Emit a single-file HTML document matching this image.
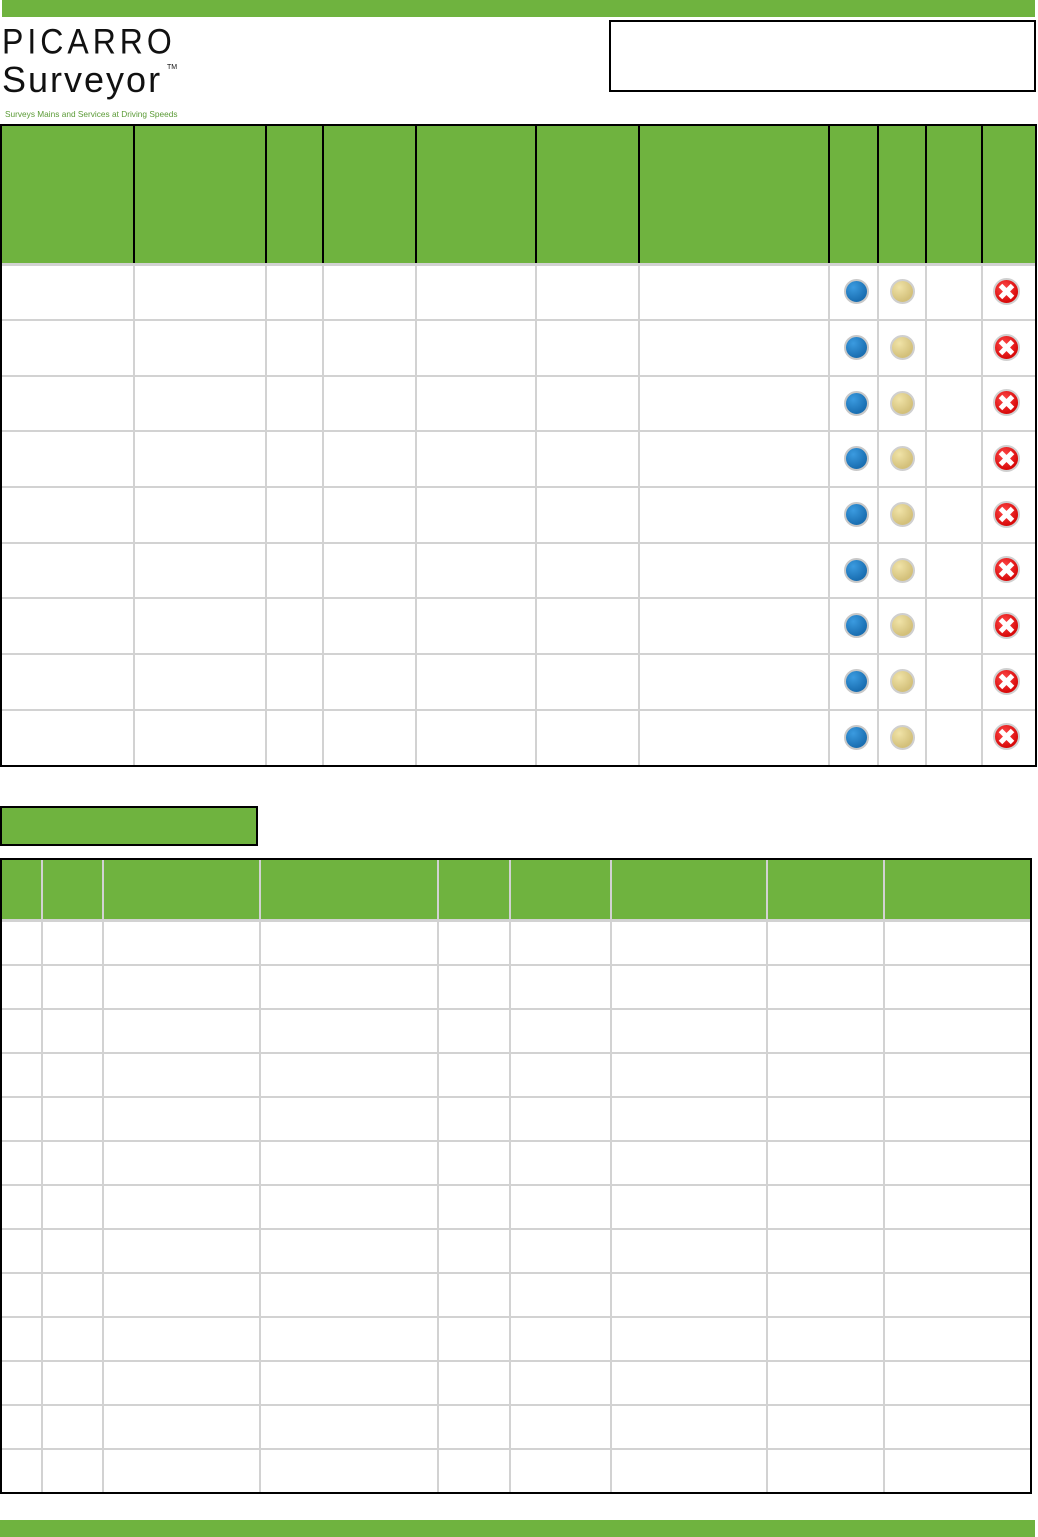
<!DOCTYPE html>
<html><head><meta charset="utf-8"><style>
body{margin:0;width:1038px;height:1537px;position:relative;background:#fff;overflow:hidden;font-family:"Liberation Sans",sans-serif}
div{position:absolute;box-sizing:border-box}
.g{background:#6fb33f}
.k{background:#000}
.l{background:#d2d2d2}
.b{width:25px;height:25px;border-radius:50%;border:2px solid #c8c8c8;background:radial-gradient(circle at 35% 30%,#3b9be0,#1a6fb2 70%)}
.t{width:25px;height:25px;border-radius:50%;border:2px solid #cfcfcf;background:radial-gradient(circle at 35% 30%,#f0e3a8,#d3c07a 70%)}
.x{width:27px;height:27px;border-radius:50%;border:2px solid #d0d0d0;background:radial-gradient(circle at 40% 35%,#ff4a4a,#d80a0a 70%)}
.x:before,.x:after{content:"";position:absolute;left:3px;top:9px;width:17px;height:5px;background:#fff;transform:rotate(45deg)}
.x:after{transform:rotate(-45deg)}
</style></head><body>
<div class="g" style="left:2px;top:0;width:1033px;height:17px"></div>
<div class="g" style="left:0;top:1520px;width:1035px;height:17px"></div>
<div style="left:2px;top:24px;font-size:32px;letter-spacing:4px;line-height:32px;color:#111;transform:scaleY(1.1);transform-origin:0 0">PICARRO</div>
<div style="left:2px;top:60px;font-size:36px;letter-spacing:2px;line-height:40px;color:#111">Surveyor</div>
<div style="left:167px;top:64px;font-size:7px;color:#111">TM</div>
<div style="left:5px;top:109px;font-size:8.3px;color:#5a9a35;white-space:nowrap">Surveys Mains and Services at Driving Speeds</div>
<div style="left:609px;top:20px;width:427px;height:72px;border:2px solid #000"></div>

<div class="g" style="left:0;top:124px;width:1037px;height:140px"></div>
<div class="k" style="left:0;top:124px;width:1037px;height:2px"></div>
<div class="k" style="left:0;top:124px;width:2px;height:643px"></div>
<div class="k" style="left:1035px;top:124px;width:2px;height:643px"></div>
<div class="k" style="left:0;top:765px;width:1037px;height:2px"></div>

<div class="g" style="left:0;top:806px;width:258px;height:40px;border:2px solid #000"></div>
<div class="g" style="left:0;top:858px;width:1032px;height:62px"></div>
<div class="k" style="left:0;top:858px;width:1032px;height:2px"></div>
<div class="k" style="left:0;top:858px;width:2px;height:636px"></div>
<div class="k" style="left:1030px;top:858px;width:2px;height:636px"></div>
<div class="k" style="left:0;top:1492px;width:1032px;height:2px"></div>

<div class="l" style="left:133px;top:264px;width:2px;height:501px"></div>
<div class="k" style="left:133px;top:126px;width:2px;height:138px"></div>
<div class="l" style="left:265px;top:264px;width:2px;height:501px"></div>
<div class="k" style="left:265px;top:126px;width:2px;height:138px"></div>
<div class="l" style="left:322px;top:264px;width:2px;height:501px"></div>
<div class="k" style="left:322px;top:126px;width:2px;height:138px"></div>
<div class="l" style="left:415px;top:264px;width:2px;height:501px"></div>
<div class="k" style="left:415px;top:126px;width:2px;height:138px"></div>
<div class="l" style="left:535px;top:264px;width:2px;height:501px"></div>
<div class="k" style="left:535px;top:126px;width:2px;height:138px"></div>
<div class="l" style="left:638px;top:264px;width:2px;height:501px"></div>
<div class="k" style="left:638px;top:126px;width:2px;height:138px"></div>
<div class="l" style="left:828px;top:264px;width:2px;height:501px"></div>
<div class="k" style="left:828px;top:126px;width:2px;height:138px"></div>
<div class="l" style="left:877px;top:264px;width:2px;height:501px"></div>
<div class="k" style="left:877px;top:126px;width:2px;height:138px"></div>
<div class="l" style="left:925px;top:264px;width:2px;height:501px"></div>
<div class="k" style="left:925px;top:126px;width:2px;height:138px"></div>
<div class="l" style="left:981px;top:264px;width:2px;height:501px"></div>
<div class="k" style="left:981px;top:126px;width:2px;height:138px"></div>

<div class="l" style="left:2px;top:263px;width:1033px;height:3px"></div>
<div class="l" style="left:2px;top:319px;width:1033px;height:2px"></div>
<div class="l" style="left:2px;top:375px;width:1033px;height:2px"></div>
<div class="l" style="left:2px;top:430px;width:1033px;height:2px"></div>
<div class="l" style="left:2px;top:486px;width:1033px;height:2px"></div>
<div class="l" style="left:2px;top:542px;width:1033px;height:2px"></div>
<div class="l" style="left:2px;top:597px;width:1033px;height:2px"></div>
<div class="l" style="left:2px;top:653px;width:1033px;height:2px"></div>
<div class="l" style="left:2px;top:709px;width:1033px;height:2px"></div>

<div class="b" style="left:844px;top:279px"></div><div class="t" style="left:890px;top:279px"></div><div class="x" style="left:993px;top:278px"></div>
<div class="b" style="left:844px;top:335px"></div><div class="t" style="left:890px;top:335px"></div><div class="x" style="left:993px;top:334px"></div>
<div class="b" style="left:844px;top:391px"></div><div class="t" style="left:890px;top:391px"></div><div class="x" style="left:993px;top:389px"></div>
<div class="b" style="left:844px;top:446px"></div><div class="t" style="left:890px;top:446px"></div><div class="x" style="left:993px;top:445px"></div>
<div class="b" style="left:844px;top:502px"></div><div class="t" style="left:890px;top:502px"></div><div class="x" style="left:993px;top:501px"></div>
<div class="b" style="left:844px;top:558px"></div><div class="t" style="left:890px;top:558px"></div><div class="x" style="left:993px;top:556px"></div>
<div class="b" style="left:844px;top:613px"></div><div class="t" style="left:890px;top:613px"></div><div class="x" style="left:993px;top:612px"></div>
<div class="b" style="left:844px;top:669px"></div><div class="t" style="left:890px;top:669px"></div><div class="x" style="left:993px;top:668px"></div>
<div class="b" style="left:844px;top:725px"></div><div class="t" style="left:890px;top:725px"></div><div class="x" style="left:993px;top:723px"></div>

<div class="l" style="left:41px;top:860px;width:2px;height:632px"></div>
<div class="l" style="left:102px;top:860px;width:2px;height:632px"></div>
<div class="l" style="left:259px;top:860px;width:2px;height:632px"></div>
<div class="l" style="left:437px;top:860px;width:2px;height:632px"></div>
<div class="l" style="left:509px;top:860px;width:2px;height:632px"></div>
<div class="l" style="left:610px;top:860px;width:2px;height:632px"></div>
<div class="l" style="left:766px;top:860px;width:2px;height:632px"></div>
<div class="l" style="left:883px;top:860px;width:2px;height:632px"></div>

<div class="l" style="left:2px;top:919px;width:1028px;height:3px"></div>
<div class="l" style="left:2px;top:964px;width:1028px;height:2px"></div>
<div class="l" style="left:2px;top:1008px;width:1028px;height:2px"></div>
<div class="l" style="left:2px;top:1052px;width:1028px;height:2px"></div>
<div class="l" style="left:2px;top:1096px;width:1028px;height:2px"></div>
<div class="l" style="left:2px;top:1140px;width:1028px;height:2px"></div>
<div class="l" style="left:2px;top:1184px;width:1028px;height:2px"></div>
<div class="l" style="left:2px;top:1228px;width:1028px;height:2px"></div>
<div class="l" style="left:2px;top:1272px;width:1028px;height:2px"></div>
<div class="l" style="left:2px;top:1316px;width:1028px;height:2px"></div>
<div class="l" style="left:2px;top:1360px;width:1028px;height:2px"></div>
<div class="l" style="left:2px;top:1404px;width:1028px;height:2px"></div>
<div class="l" style="left:2px;top:1448px;width:1028px;height:2px"></div>
</body></html>
